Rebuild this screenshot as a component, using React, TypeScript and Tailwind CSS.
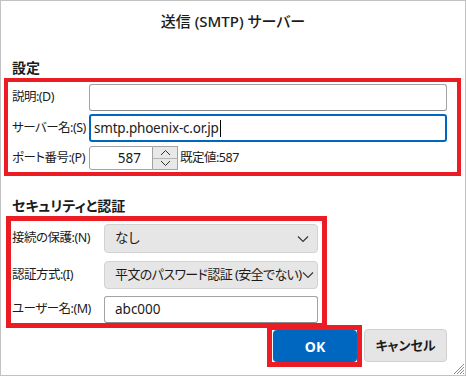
import React from "react";

const FONT = "[font-family:'Noto_Sans','Noto_Sans_CJK_JP',sans-serif] [font-feature-settings:'palt']";
const LBL = "text-[12.5px] tracking-[-0.5px] whitespace-nowrap";

function Chevron() {
  return (
    <svg width="12" height="8" viewBox="0 0 12 8" className="shrink-0">
      <path d="M1 1.5 L6 6.5 L11 1.5" fill="none" stroke="#333" strokeWidth="1.1" />
    </svg>
  );
}

export default function App() {
  return (
    <div className={`relative w-[466px] h-[376px] border border-[#c2c2c2] bg-white overflow-hidden text-[#1b1b1b] ${FONT}`}>
      <div className="h-[40px] flex items-center justify-center text-[15px] font-medium">送信 (SMTP) サーバー</div>

      <div className="mt-[17px] pl-[11px] h-[20px] leading-[20px] text-[14px] font-bold">設定</div>

      <div className="ml-[3px] w-[457px] h-[98px] border-4 border-[#ec1c24] flex flex-col pt-[2px]">
        <div className="flex items-center h-[27px]">
          <div className={`w-[81px] pl-[4px] ${LBL}`}>説明:(D)</div>
          <div className="w-[358px] h-[27px] border border-[#a3a3a3] border-b-[#8a8a8a] rounded-[3px]" />
        </div>
        <div className="flex items-center h-[28px] mt-[3px]">
          <div className={`w-[81px] pl-[4px] ${LBL}`}>サーバー名:(S)</div>
          <div className="w-[358px] h-[28px] border-2 border-[#0067c0] rounded-[3px] flex items-center pl-[3px] text-[13.5px] tracking-[-0.2px]">
            smtp.phoenix-c.or.jp<span className="inline-block w-[1px] h-[17px] bg-black ml-[1px]" />
          </div>
        </div>
        <div className="flex items-center h-[24px] mt-[4px]">
          <div className={`w-[81px] pl-[4px] ${LBL}`}>ポート番号:(P)</div>
          <div className="w-[64px] h-[24px] border border-[#a3a3a3] rounded-l-[3px] flex items-center justify-end pr-[11px] text-[13.5px]">587</div>
          <div className="w-[25px] h-[24px] border border-l-0 border-[#a3a3a3] flex flex-col bg-[#f0f0f0]">
            <div className="flex-1 flex items-center justify-center border-b border-[#b5b5b5] bg-[#e8e8e8]">
              <svg width="11" height="7" viewBox="0 0 11 7"><path d="M1 6 L5.5 1.5 L10 6" fill="none" stroke="#333" strokeWidth="1" /></svg>
            </div>
            <div className="flex-1 flex items-center justify-center bg-[#e8e8e8]">
              <svg width="11" height="7" viewBox="0 0 11 7"><path d="M1 1 L5.5 5.5 L10 1" fill="none" stroke="#333" strokeWidth="1" /></svg>
            </div>
          </div>
          <div className={`ml-[2px] ${LBL}`}>既定値:587</div>
        </div>
      </div>

      <div className="mt-[20px] pl-[11px] h-[20px] leading-[20px] text-[14px] font-bold">セキュリティと認証</div>

      <div className="ml-[5px] w-[321px] h-[112px] border-[5px] border-[#ec1c24] flex flex-col pt-[3px]">
        <div className="flex items-center h-[29px]">
          <div className={`w-[93px] pl-[1px] ${LBL}`}>接続の保護:(N)</div>
          <div className="w-[214px] h-[29px] bg-[#e6e6e6] border border-[#d2d2d2] rounded-[4px] flex items-center justify-between pl-[10px] pr-[8px] text-[13.5px]">
            <span>なし</span>
            <Chevron />
          </div>
        </div>
        <div className="flex items-center h-[28px] mt-[8px]">
          <div className={`w-[93px] pl-[1px] ${LBL}`}>認証方式:(I)</div>
          <div className="w-[214px] h-[28px] bg-[#e6e6e6] border border-[#d2d2d2] rounded-[4px] flex items-center justify-between pl-[10px] pr-[6px] text-[13px] tracking-[-0.6px] whitespace-nowrap overflow-hidden">
            <span>平文のパスワード認証 (安全でない)</span>
            <Chevron />
          </div>
        </div>
        <div className="flex items-center h-[27px] mt-[7px]">
          <div className={`w-[93px] pl-[1px] ${LBL}`}>ユーザー名:(M)</div>
          <div className="w-[214px] h-[27px] border border-[#a3a3a3] border-b-[#8a8a8a] rounded-[3px] flex items-center pl-[10px] text-[13.5px]">abc000</div>
        </div>
      </div>

      <div className="flex justify-end items-start pr-[18px] mt-[-3px]">
        <div className="w-[95px] h-[42px] border-[5px] border-[#ec1c24] pl-[1px]">
          <div className="w-[84px] h-[32px] bg-[#0067c0] rounded-[4px] flex items-center justify-center text-white text-[14px] font-bold">OK</div>
        </div>
        <div className="ml-[2px] mt-[4px] w-[83px] h-[33px] bg-[#e5e5e5] border border-[#d0d0d0] rounded-[4px] flex items-center justify-center text-[13px] font-bold">キャンセル</div>
      </div>

      <svg className="absolute right-0 bottom-0" width="14" height="14" viewBox="0 0 14 14">
        <path d="M13 3 L3 13 M13 6 L6 13 M13 9 L9 13 M13 12 L12 13" stroke="#8a8a8a" strokeWidth="1" />
      </svg>
    </div>
  );
}
